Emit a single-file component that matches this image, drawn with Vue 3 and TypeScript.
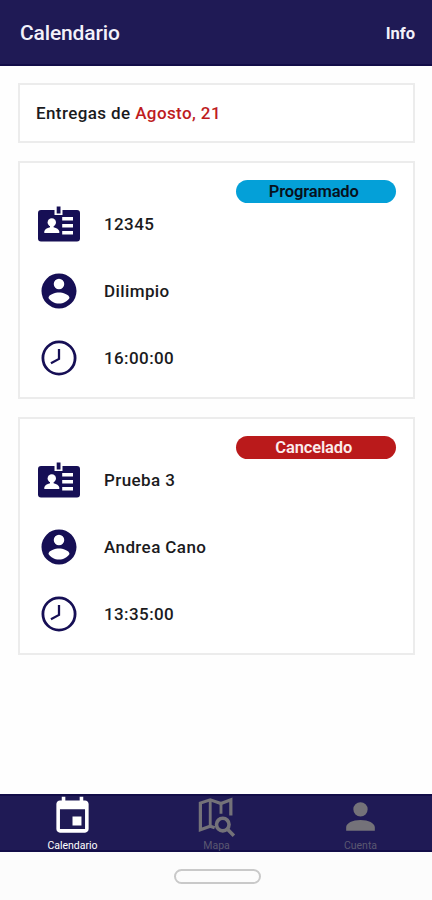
<script setup lang="ts">
interface Delivery {
  id: string
  status: string
  tone: 'scheduled' | 'cancelled'
  code: string
  person: string
  time: string
}

const deliveries: Delivery[] = [
  { id: 'a', status: 'Programado', tone: 'scheduled', code: '12345', person: 'Dilimpio', time: '16:00:00' },
  { id: 'b', status: 'Cancelado', tone: 'cancelled', code: 'Prueba 3', person: 'Andrea Cano', time: '13:35:00' },
]
</script>

<template>
  <div class="screen">
    <header class="topbar">
      <h1 class="title">Calendario</h1>
      <span class="info">Info</span>
    </header>

    <main class="content">
      <section class="card heading">
        <p>Entregas de <span class="date">Agosto, 21</span></p>
      </section>

      <section v-for="d in deliveries" :key="d.id" class="card delivery">
        <span class="status" :class="d.tone">{{ d.status }}</span>
        <div class="row">
          <svg class="icon-id" viewBox="0 0 42 36">
            <path fill="currentColor" d="M3 4H16.5V9H24.5V4H39Q42 4 42 7V32.5Q42 35.5 39 35.5H3Q0 35.5 0 32.5V7Q0 4 3 4Z" />
            <rect x="18.7" y="0.5" width="3.8" height="7" fill="currentColor" />
            <circle cx="13.8" cy="16.4" r="4.2" fill="#fff" />
            <path fill="#fff" d="M6.3 27V25.2Q7.2 22.3 12 21.2V19H15.6V21.2Q20.4 22.3 21.3 25.2V27Z" />
            <path fill="#fff" d="M24.2 11h10.8v3.4h-10.8zM24.2 18h10.8v3.4h-10.8zM24.2 25h10.8v3.4h-10.8z" />
          </svg>
          <span>{{ d.code }}</span>
        </div>
        <div class="row">
          <svg class="icon" viewBox="0 0 24 24">
            <path fill="currentColor" d="M12,19.2C9.5,19.2 7.29,17.92 6,16C6.03,14 10,12.9 12,12.9C14,12.9 17.97,14 18,16C16.71,17.92 14.5,19.2 12,19.2M12,5A3,3 0 0,1 15,8A3,3 0 0,1 12,11A3,3 0 0,1 9,8A3,3 0 0,1 12,5M12,2A10,10 0 0,0 2,12A10,10 0 0,0 12,22A10,10 0 0,0 22,12C22,6.47 17.5,2 12,2Z" />
          </svg>
          <span>{{ d.person }}</span>
        </div>
        <div class="row">
          <svg class="icon" viewBox="0 0 24 24" fill="none" stroke="currentColor">
            <circle cx="12" cy="12" r="9.2" stroke-width="1.6" />
            <path d="M12 6.8V12.5L7.4 15" stroke-width="1.3" />
          </svg>
          <span>{{ d.time }}</span>
        </div>
      </section>
    </main>

    <nav class="tabs">
      <div class="tab active">
        <svg class="tab-icon" viewBox="0 0 24 24">
          <path fill="currentColor" d="M17 12h-5v5h5v-5zM16 1v2H8V1H6v2H5c-1.11 0-2 .9-2 2v14c0 1.1.89 2 2 2h14c1.1 0 2-.9 2-2V5c0-1.1-.9-2-2-2h-1V1h-2zm3 18H5V8h14v11z" />
        </svg>
        <span>Calendario</span>
      </div>
      <div class="tab">
        <svg class="tab-icon" viewBox="0 0 24 24" fill="none" stroke="currentColor">
          <path d="M11 18.3L8.5 17.4L3 19.4V4.5L8.5 2.7L14.5 4.8L20 2.7V11.5" stroke-width="1.8" />
          <path d="M8.5 3V17.3M14.5 4.8V10.5" stroke-width="1.6" />
          <circle cx="15.5" cy="16.5" r="3.5" stroke-width="2" />
          <path d="M18 19L21.7 22.7" stroke-width="2" />
        </svg>
        <span>Mapa</span>
      </div>
      <div class="tab">
        <svg class="tab-icon" viewBox="0 0 24 24">
          <path fill="currentColor" d="M12 4A4 4 0 0 1 12 12A4 4 0 0 1 12 4M12 14C16.42 14 20 15.79 20 18V20H4V18C4 15.79 7.58 14 12 14Z" />
        </svg>
        <span>Cuenta</span>
      </div>
    </nav>

    <footer class="system"><span class="home"></span></footer>
  </div>
</template>

<style>
body {
  margin: 0;
  background: #fefefe;
}
</style>

<style scoped>
.screen {
  display: flex;
  flex-direction: column;
  box-sizing: border-box;
  width: 432px;
  height: 900px;
  overflow: hidden;
  background: #fefefe;
  color: #1b1b1d;
  font-family: Roboto, sans-serif;
  font-weight: 500;
}
.topbar {
  display: flex;
  flex: none;
  align-items: center;
  justify-content: space-between;
  box-sizing: border-box;
  height: 66px;
  padding: 2px 17px 0 20px;
  border-bottom: 2px solid #120d48;
  background: #1f1a55;
  color: #f3f1fa;
}
.title {
  margin: 0;
  font-size: 21px;
  font-weight: 500;
  letter-spacing: -0.15px;
}
.info {
  font-size: 16.5px;
  font-weight: 700;
}
.content {
  display: flex;
  flex: 1;
  flex-direction: column;
  gap: 18px;
  padding: 17px 17px 0 18px;
}
.card {
  position: relative;
  box-sizing: border-box;
  border: 2px solid #ececec;
  background: #fff;
}
.heading {
  display: flex;
  align-items: center;
  height: 60px;
  padding: 0 0 1px 16px;
}
.heading p {
  margin: 0;
  font-size: 17px;
  letter-spacing: 0.4px;
}
.date {
  color: #be1c1e;
}
.delivery {
  height: 238px;
  padding: 27px 16px 0 18px;
}
.status {
  position: absolute;
  top: 17px;
  right: 17px;
  box-sizing: border-box;
  width: 160.5px;
  height: 23px;
  padding-right: 4px;
  border-radius: 12px;
  font-size: 16.5px;
  font-weight: 600;
  letter-spacing: -0.15px;
  line-height: 24px;
  text-align: center;
}
.scheduled {
  background: #04a0d8;
  color: #07111d;
}
.cancelled {
  background: #ba1a1b;
  color: #fbecec;
}
.row {
  display: grid;
  grid-template-columns: 42px 1fr;
  align-items: center;
  column-gap: 24px;
  height: 67px;
  font-size: 17px;
  letter-spacing: 0.4px;
}
.icon,
.icon-id {
  display: block;
  width: 42px;
  color: #160f55;
}
.icon {
  height: 42px;
}
.icon-id {
  height: 36px;
}
.tabs {
  display: grid;
  flex: none;
  grid-template-columns: repeat(3, 1fr);
  box-sizing: border-box;
  height: 58px;
  border-top: 2px solid #120d48;
  border-bottom: 2px solid #120d48;
  background: #1f1a55;
}
.tab {
  display: flex;
  flex-direction: column;
  align-items: center;
  color: #747279;
  font-size: 10.5px;
  font-weight: 400;
  line-height: 13px;
  padding-left: 1px;
}
.tab span {
  color: #5b5871;
}
.tab.active,
.tab.active span {
  color: #fff;
}
.tab-icon {
  flex: none;
  display: block;
  width: 43px;
  height: 43px;
  margin: -1px 0 1px;
}
.system {
  display: flex;
  flex: none;
  align-items: center;
  justify-content: center;
  box-sizing: border-box;
  height: 48px;
  padding: 1px 0 0 2px;
  background: #fcfcfc;
}
.home {
  box-sizing: border-box;
  width: 87px;
  height: 15px;
  border: 2px solid #c9c9c9;
  border-radius: 8px;
}
</style>
